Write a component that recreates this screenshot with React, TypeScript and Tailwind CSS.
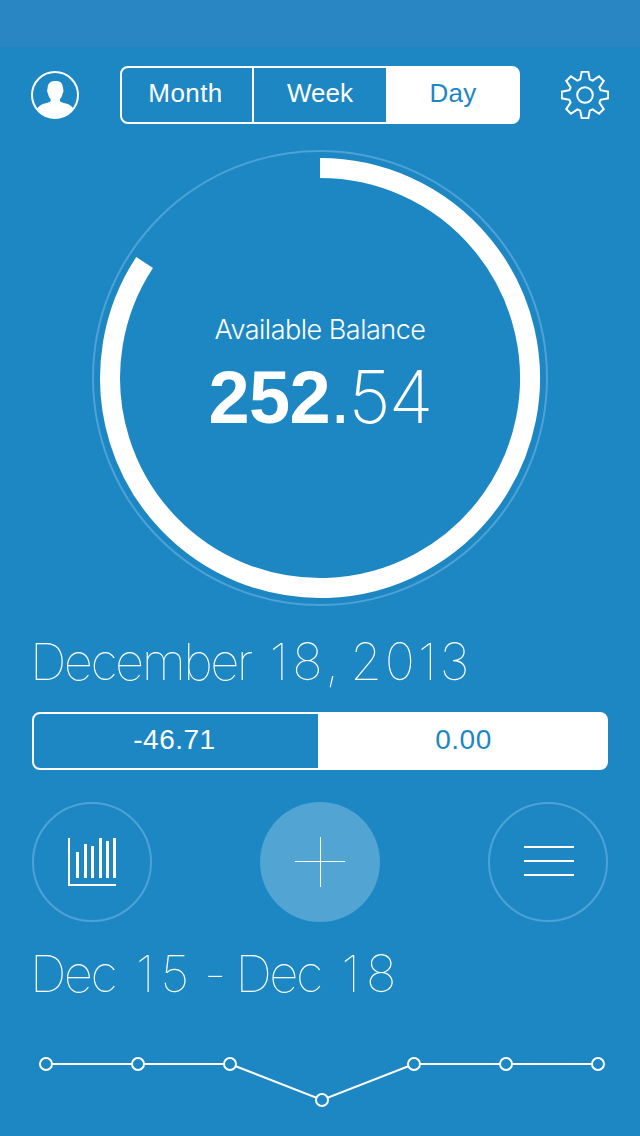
const periods = ["Month", "Week", "Day"]

const bars = [
  { x: 8, top: 14 },
  { x: 16, top: 6 },
  { x: 23, top: 8 },
  { x: 31, top: 0 },
  { x: 38, top: 3 },
  { x: 45, top: 0 },
]

const points = [
  [46, 24],
  [138, 24],
  [230, 24],
  [322, 60],
  [414, 24],
  [506, 24],
  [598, 24],
]

// eight trapezoid teeth around the centre
const gearPoints = Array.from({ length: 8 }, (_, i) => {
  const a = (i * Math.PI) / 4
  return [[-4.8, -15.6], [-3.3, -23.2], [3.3, -23.2], [4.8, -15.6]]
    .map(([x, y]) => `${(x * Math.cos(a) - y * Math.sin(a)).toFixed(2)},${(x * Math.sin(a) + y * Math.cos(a)).toFixed(2)}`)
    .join(" ")
}).join(" ")

function ProfileIcon() {
  return (
    <svg viewBox="0 0 48 48" width="48" height="48">
      <defs>
        <clipPath id="profile-clip"><circle cx="24" cy="24" r="23" /></clipPath>
      </defs>
      <path
        clipPath="url(#profile-clip)"
        fill="white"
        d="M24.500 10C19 10 16.700 12.500 16.600 17.500c-.7 1-.5 4 .4 5 .4 2.600 1.400 4.300 2.600 5.400V30c-.6 1.200-2.300 1.700-4.800 2.200-4.500.9-7.500 2.800-9 6.300v11.500h37V38.500c-1.500-3.500-4.500-5.400-9-6.300-2.500-.5-4.200-1-4.800-2.200v-2.100c1.200-1.100 2.200-2.800 2.600-5.400.9-1 1.100-4 .4-5C31.900 12.500 30 10 24.500 10z"
      />
      <circle cx="24" cy="24" r="23" fill="none" stroke="white" strokeWidth="2" />
    </svg>
  )
}

function GearIcon() {
  return (
    <svg viewBox="-24 -24 48 48" width="48" height="48" fill="none" stroke="white" strokeWidth="2">
      <polygon points={gearPoints} />
      <circle r="7.8" />
    </svg>
  )
}

function BalanceRing() {
  return (
    <div className="grid h-[456px] w-[456px] place-items-center">
      <svg viewBox="0 0 456 456" className="col-start-1 row-start-1 h-full w-full" fill="none">
        <circle cx="228" cy="228" r="227" stroke="#4ea2d5" strokeWidth="2" />
        <path d="M228 18A210 210 0 1 1 52.6 112.600" stroke="white" strokeWidth="20" />
      </svg>
      <div className="col-start-1 row-start-1 flex flex-col items-center pb-[2px]">
        <p className="font-[Inter] text-[27px] leading-8 font-light tracking-[-0.5px]">Available Balance</p>
        <p className="mt-[9px] flex items-baseline text-[74px] leading-[84px]">
          <span className="font-bold tracking-[-0.700px]">252</span>
          <span>.</span>
          <span className="-ml-[2px] font-[Inter] text-[73px] font-extralight tracking-[-2px]">54</span>
        </p>
      </div>
    </div>
  )
}

export default function App() {
  return (
    <div className="flex h-[1136px] w-[640px] flex-col overflow-hidden bg-[#1d87c4] font-['Liberation_Sans',sans-serif] text-white">
      <div className="h-[47px] shrink-0 bg-[#2a86c3]" />

      <header className="mt-[19px] flex h-[58px] shrink-0 items-center justify-between px-[31px]">
        <ProfileIcon />
        <div className="flex h-[58px] w-[400px] rounded-[8px] border-2 border-white">
          {periods.map((period) => (
            <button
              key={period}
              className={
                period === "Day"
                  ? "flex-1 rounded-r-[4px] bg-white pb-1 text-[26px] tracking-[0.3px] text-[#1d87c4]"
                  : "w-[132px] border-r-2 border-white pr-[3px] pb-1 text-[26px] tracking-[0.4px] nth-2:w-[134px] nth-2:pr-0 nth-2:tracking-normal"
              }
            >
              {period}
            </button>
          ))}
        </div>
        <GearIcon />
      </header>

      <main className="flex flex-col items-center pt-[26px]">
        <BalanceRing />

        <h1 className="mt-[24px] h-[64px] w-full pl-[30px] font-[Inter] text-[51px] leading-[64px] font-thin tracking-[-2.600px] whitespace-nowrap">
          December <span className="ml-[7px] tracking-[4px]">18,</span> <span className="-ml-[5px] tracking-[3px]">2013</span>
        </h1>

        <div className="mt-[18px] flex h-[58px] w-[576px] rounded-[8px] border-2 border-white text-[28px] tracking-[0.5px]">
          <div className="flex w-[284px] items-center justify-center pr-[3px] pb-[2px]">-46.71</div>
          <div className="flex flex-1 items-center justify-center rounded-r-[4px] bg-white pb-[2px] pl-[3px] text-[#1d87c4]">0.00</div>
        </div>

        <div className="mt-[32px] flex w-[576px] justify-between">
          <button className="flex size-[120px] items-center justify-center rounded-full border-2 border-[#4ea2d5]">
            <svg viewBox="0 0 48 48" width="48" height="48" fill="white" shapeRendering="crispEdges">
              <path d="M0 0h2v46h46v2H0z" />
              {bars.map((bar) => (
                <rect key={bar.x} x={bar.x} y={bar.top} width="3" height={40 - bar.top} />
              ))}
            </svg>
          </button>
          <button className="flex size-[120px] items-center justify-center rounded-full bg-[#52a4d3]">
            <svg viewBox="0 0 50 50" width="50" height="50" fill="white" shapeRendering="crispEdges">
              <path d="M25 0h1v50h-1zM0 24h50v1H0z" />
            </svg>
          </button>
          <button className="flex size-[120px] flex-col items-center justify-center gap-3 rounded-full border-2 border-[#4ea2d5] pb-[2px] pl-[2px]">
            <span className="h-[2px] w-[50px] bg-white" />
            <span className="h-[2px] w-[50px] bg-white" />
            <span className="h-[2px] w-[50px] bg-white" />
          </button>
        </div>

        <h2 className="mt-[20px] h-[64px] w-full pl-[30px] font-[Inter] text-[51px] leading-[64px] font-thin tracking-[-2.600px] whitespace-nowrap">
          Dec <span className="ml-[9px] tracking-[6px]">15</span> <span className="-ml-[3px]">-</span> Dec <span className="ml-[9px] tracking-[6px]">18</span>
        </h2>

        <svg viewBox="0 0 640 96" width="640" height="96" className="mt-[34px]" stroke="white" strokeWidth="2">
          <polyline points={points.map((p) => p.join(",")).join(" ")} fill="none" />
          {points.map(([x, y]) => (
            <circle key={x} cx={x} cy={y} r="6" fill="#1d87c4" />
          ))}
        </svg>
      </main>
    </div>
  )
}
